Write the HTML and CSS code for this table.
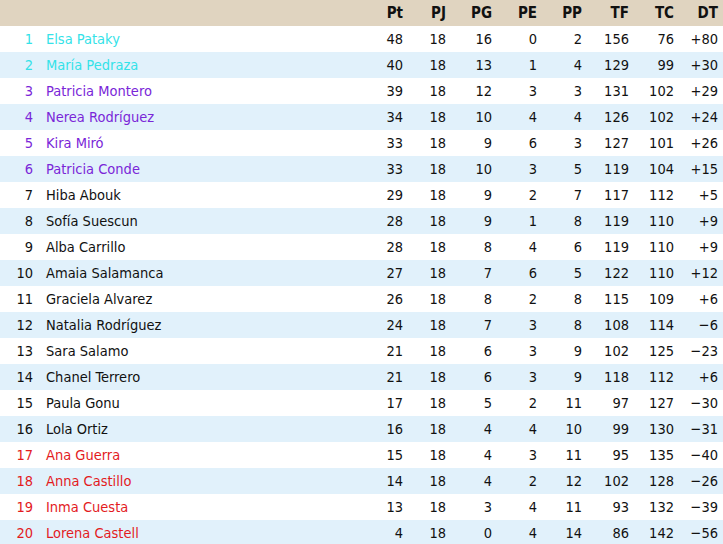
FILE: index.html
```html
<!DOCTYPE html>
<html>
<head>
<meta charset="utf-8">
<link rel="stylesheet" href="styles.css">
</head>
<body>
<table class="standings">
<colgroup>
<col class="c-rank"><col class="c-name"><col class="c-pt"><col class="c-pj"><col class="c-pg"><col class="c-pe"><col class="c-pp"><col class="c-tf"><col class="c-tc"><col class="c-dt">
</colgroup>
<thead>
<tr><th></th><th></th><th>Pt</th><th>PJ</th><th>PG</th><th>PE</th><th>PP</th><th>TF</th><th>TC</th><th class="last">DT</th></tr>
</thead>
<tbody>
<tr class="top"><td class="rank">1</td><td class="name">Elsa Pataky</td><td>48</td><td>18</td><td>16</td><td>0</td><td>2</td><td>156</td><td>76</td><td class="last">+80</td></tr>
<tr class="top"><td class="rank">2</td><td class="name">María Pedraza</td><td>40</td><td>18</td><td>13</td><td>1</td><td>4</td><td>129</td><td>99</td><td class="last">+30</td></tr>
<tr class="mid"><td class="rank">3</td><td class="name">Patricia Montero</td><td>39</td><td>18</td><td>12</td><td>3</td><td>3</td><td>131</td><td>102</td><td class="last">+29</td></tr>
<tr class="mid"><td class="rank">4</td><td class="name">Nerea Rodríguez</td><td>34</td><td>18</td><td>10</td><td>4</td><td>4</td><td>126</td><td>102</td><td class="last">+24</td></tr>
<tr class="mid"><td class="rank">5</td><td class="name">Kira Miró</td><td>33</td><td>18</td><td>9</td><td>6</td><td>3</td><td>127</td><td>101</td><td class="last">+26</td></tr>
<tr class="mid"><td class="rank">6</td><td class="name">Patricia Conde</td><td>33</td><td>18</td><td>10</td><td>3</td><td>5</td><td>119</td><td>104</td><td class="last">+15</td></tr>
<tr><td class="rank">7</td><td class="name">Hiba Abouk</td><td>29</td><td>18</td><td>9</td><td>2</td><td>7</td><td>117</td><td>112</td><td class="last">+5</td></tr>
<tr><td class="rank">8</td><td class="name">Sofía Suescun</td><td>28</td><td>18</td><td>9</td><td>1</td><td>8</td><td>119</td><td>110</td><td class="last">+9</td></tr>
<tr><td class="rank">9</td><td class="name">Alba Carrillo</td><td>28</td><td>18</td><td>8</td><td>4</td><td>6</td><td>119</td><td>110</td><td class="last">+9</td></tr>
<tr><td class="rank">10</td><td class="name">Amaia Salamanca</td><td>27</td><td>18</td><td>7</td><td>6</td><td>5</td><td>122</td><td>110</td><td class="last">+12</td></tr>
<tr><td class="rank">11</td><td class="name">Graciela Alvarez</td><td>26</td><td>18</td><td>8</td><td>2</td><td>8</td><td>115</td><td>109</td><td class="last">+6</td></tr>
<tr><td class="rank">12</td><td class="name">Natalia Rodríguez</td><td>24</td><td>18</td><td>7</td><td>3</td><td>8</td><td>108</td><td>114</td><td class="last">−6</td></tr>
<tr><td class="rank">13</td><td class="name">Sara Salamo</td><td>21</td><td>18</td><td>6</td><td>3</td><td>9</td><td>102</td><td>125</td><td class="last">−23</td></tr>
<tr><td class="rank">14</td><td class="name">Chanel Terrero</td><td>21</td><td>18</td><td>6</td><td>3</td><td>9</td><td>118</td><td>112</td><td class="last">+6</td></tr>
<tr><td class="rank">15</td><td class="name">Paula Gonu</td><td>17</td><td>18</td><td>5</td><td>2</td><td>11</td><td>97</td><td>127</td><td class="last">−30</td></tr>
<tr><td class="rank">16</td><td class="name">Lola Ortiz</td><td>16</td><td>18</td><td>4</td><td>4</td><td>10</td><td>99</td><td>130</td><td class="last">−31</td></tr>
<tr class="low"><td class="rank">17</td><td class="name">Ana Guerra</td><td>15</td><td>18</td><td>4</td><td>3</td><td>11</td><td>95</td><td>135</td><td class="last">−40</td></tr>
<tr class="low"><td class="rank">18</td><td class="name">Anna Castillo</td><td>14</td><td>18</td><td>4</td><td>2</td><td>12</td><td>102</td><td>128</td><td class="last">−26</td></tr>
<tr class="low"><td class="rank">19</td><td class="name">Inma Cuesta</td><td>13</td><td>18</td><td>3</td><td>4</td><td>11</td><td>93</td><td>132</td><td class="last">−39</td></tr>
<tr class="low"><td class="rank">20</td><td class="name">Lorena Castell</td><td>4</td><td>18</td><td>0</td><td>4</td><td>14</td><td>86</td><td>142</td><td class="last">−56</td></tr>
</tbody>
</table>
</body>
</html>
```
FILE: styles.css
```css
html, body {
  margin: 0;
  padding: 0;
  background: #ffffff;
}
body {
  font-family: "DejaVu Sans Condensed", "DejaVu Sans", sans-serif;
  font-size: 14.5px;
  color: #111111;
}
.standings {
  width: 723px;
  border-collapse: collapse;
  table-layout: fixed;
}
.c-rank { width: 33px; }
.c-name { width: 327px; }
.c-pt { width: 43px; }
.c-pj { width: 43px; }
.c-pg { width: 46px; }
.c-pe { width: 45px; }
.c-pp { width: 45px; }
.c-tf { width: 47px; }
.c-tc { width: 45px; }
.c-dt { width: 49px; }
.standings th, .standings td {
  height: 26px;
  padding: 0;
  text-align: right;
  vertical-align: middle;
  white-space: nowrap;
  line-height: 26px;
}
.standings thead th {
  background: #e0d4c0;
  font-weight: bold;
  font-size: 15px;
  color: #111111;
}
.standings tbody tr:nth-child(even) td {
  background: #e1f1fb;
}
.standings .last {
  padding-right: 5px;
}
.standings td.name {
  text-align: left;
  padding-left: 13px;
}
.top .rank, .top .name { color: #34e2e8; }
.mid .rank, .mid .name { color: #7a26d8; }
.low .rank, .low .name { color: #e31b1e; }
```
